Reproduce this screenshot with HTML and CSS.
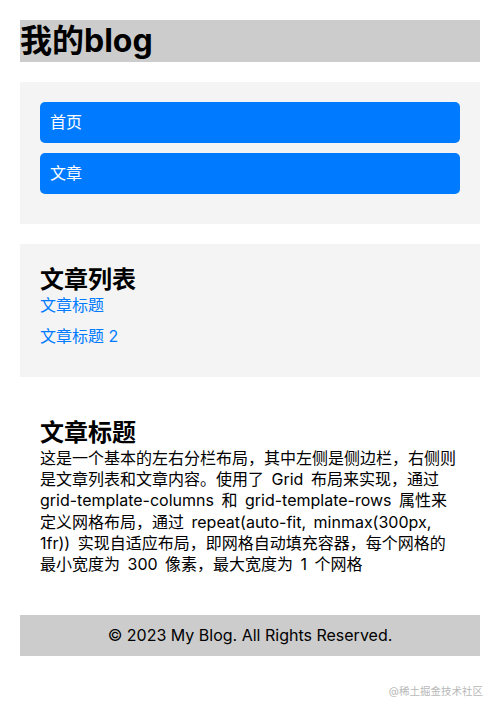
FILE: index.html
```html
<!DOCTYPE html>
<html lang="zh">
<head>
<meta charset="utf-8">
<title>我的blog</title>
<link rel="stylesheet" href="styles.css">
</head>
<body>
<div class="container">
  <header class="header"><h1>我的blog</h1></header>
  <nav class="sidebar">
    <ul>
      <li><a href="#">首页</a></li>
      <li><a href="#">文章</a></li>
    </ul>
  </nav>
  <section class="list">
    <h2>文章列表</h2>
    <ul>
      <li><a href="#">文章标题</a></li>
      <li><a href="#">文章标题 2</a></li>
    </ul>
  </section>
  <article class="content">
    <h2>文章标题</h2>
    <p>这是一个基本的左右分栏布局，其中左侧是侧边栏，右侧则是文章列表和文章内容。使用了 Grid 布局来实现，通过 grid-template-columns 和 grid-template-rows 属性来定义网格布局，通过 repeat(auto-fit, minmax(300px, 1fr)) 实现自适应布局，即网格自动填充容器，每个网格的最小宽度为 300 像素，最大宽度为 1 个网格</p>
  </article>
  <footer class="footer">© 2023 My Blog. All Rights Reserved.</footer>
</div>
<div class="watermark">@稀土掘金技术社区</div>
</body>
</html>
```
FILE: styles.css
```css
html, body { margin: 0; padding: 0; }
body {
  font-family: Inter, "Noto Sans CJK SC", sans-serif;
  font-size: 16px;
  line-height: 1.32;
  color: #000;
  background: #fff;
  position: relative;
  min-height: 714px;
}
.container {
  padding: 20px;
  display: grid;
  gap: 20px;
}
h1, h2, p, ul { margin: 0; padding: 0; }
ul { list-style: none; }
.header { background: #ccc; }
.header h1 { font-size: 32px; font-weight: 700; line-height: 42px; }
.sidebar { background: #f4f4f4; padding: 20px; }
.sidebar li { margin-bottom: 10px; }
.sidebar a {
  display: block;
  background: #007bff;
  color: #fff;
  text-decoration: none;
  padding: 10px;
  border-radius: 5px;
  line-height: 21px;
}
.list { background: #f4f4f4; padding: 20px; }
h2 { font-size: 24px; font-weight: 700; line-height: 31px; }
.list li { margin-bottom: 10px; line-height: 21px; }
.list a { color: #007bff; text-decoration: none; }
.content { padding: 20px; }
.content p { line-height: 21.2px; word-spacing: 3px; }
.footer {
  background: #ccc;
  text-align: center;
  padding: 10px;
  line-height: 21px;
}
.watermark {
  position: absolute;
  right: 17px;
  top: 684px;
  font-size: 10.5px;
  line-height: 16px;
  color: #b8b8b8;
}
```
